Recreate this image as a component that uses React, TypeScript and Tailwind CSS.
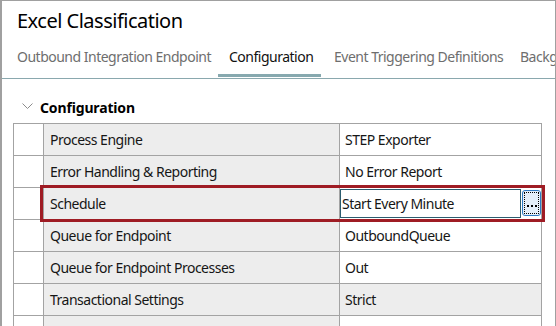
import React from 'react';

type Row = {
  label: string;
  value: string;
  readOnly?: boolean;
  editing?: boolean;
};

const rows: Row[] = [
  { label: 'Process Engine', value: 'STEP Exporter' },
  { label: 'Error Handling & Reporting', value: 'No Error Report' },
  { label: 'Schedule', value: 'Start Every Minute', editing: true },
  { label: 'Queue for Endpoint', value: 'OutboundQueue' },
  { label: 'Queue for Endpoint Processes', value: 'Out' },
  { label: 'Transactional Settings', value: 'Strict', readOnly: true },
  { label: '', value: '' },
];

const tabs = [
  { name: 'Outbound Integration Endpoint', width: 'w-[212px] pl-[11px]' },
  { name: 'Configuration', width: 'w-[103px] pl-[11px]', active: true },
  { name: 'Event Triggering Definitions', width: 'w-[189px] pl-[13px]' },
  { name: 'Background Processes', width: 'w-[120px] pl-[10px]' },
];

function EllipsisButton() {
  return (
    <div className="ml-[1px] mt-[2px] h-[26px] w-[19px] shrink-0 rounded-[3px] border border-[#2f7bc4] bg-[#e4effa] p-[1px]">
      <div className="flex h-full w-full items-end justify-center gap-[2px] border border-dotted border-black pb-[6px]">
        <span className="h-[2px] w-[2px] bg-black" />
        <span className="h-[2px] w-[2px] bg-black" />
        <span className="h-[2px] w-[2px] bg-black" />
      </div>
    </div>
  );
}

function TableRow({ row }: { row: Row }) {
  return (
    <div className="flex h-[32px]">
      <div className="w-[30px] shrink-0 border-b border-r border-[#a3a3a3] bg-white" />
      <div className="flex w-[296px] shrink-0 items-center border-b border-r border-[#a3a3a3] bg-[#ededed] pl-[6px]">
        {row.label}
      </div>
      <div
        className={`flex w-[202px] shrink-0 border-b border-r border-[#a3a3a3] ${
          row.readOnly ? 'bg-[#ededed]' : 'bg-white'
        } ${row.editing ? 'items-start' : 'items-center pl-[5px]'}`}
      >
        {row.editing ? (
          <>
            <div className="mt-[1px] flex h-[29px] w-[181px] items-center border border-[#2b5c6f] bg-white pl-[1px]">
              {row.value}
            </div>
            <EllipsisButton />
          </>
        ) : (
          row.value
        )}
      </div>
    </div>
  );
}

export default function App() {
  return (
    <div
      className="h-[326px] w-[556px] overflow-hidden border-l-2 border-r border-t border-[#a0a0a0] bg-white text-[14px] leading-[20px] tracking-[-0.5px] text-[#161616]"
      style={{ fontFamily: '"Noto Sans", sans-serif' }}
    >
      <h1 className="pl-[15px] pt-[7px] text-[20px] leading-[26px] tracking-[-0.5px] text-black">
        Excel Classification
      </h1>

      <div className="mt-[13px] flex overflow-hidden whitespace-nowrap border-b border-[#8aa8ae] pl-[4px]">
        {tabs.map((tab) => (
          <div key={tab.name} className={`flex h-[31px] shrink-0 flex-col ${tab.width}`}>
            <span className={tab.active ? 'text-[#111]' : 'text-[#6e6e6e]'}>{tab.name}</span>
            <div className="flex-1" />
            <div className={`-ml-[11px] mb-[1px] h-[3px] ${tab.active ? 'w-[103px] bg-[#87a9af]' : ''}`} />
          </div>
        ))}
      </div>

      <div className="mt-[19px] flex items-center pl-[20px]">
        <svg width="11" height="7" viewBox="0 0 11 7" className="-mt-[3px] mr-[7px]">
          <polyline points="0.5,0.5 5.5,5.5 10.5,0.5" fill="none" stroke="#8c8c8c" strokeWidth="1" />
        </svg>
        <span className="font-bold tracking-[-0.15px] text-black">Configuration</span>
      </div>

      <div className="relative ml-[11px] mt-[5px] w-[529px] border-l border-t border-[#a3a3a3]">
        {rows.map((row, i) => (
          <TableRow key={i} row={row} />
        ))}
        <div className="pointer-events-none absolute left-[26px] top-[61px] h-[37px] w-[505px] border-[3px] border-[#9f1c24]" />
      </div>
    </div>
  );
}
